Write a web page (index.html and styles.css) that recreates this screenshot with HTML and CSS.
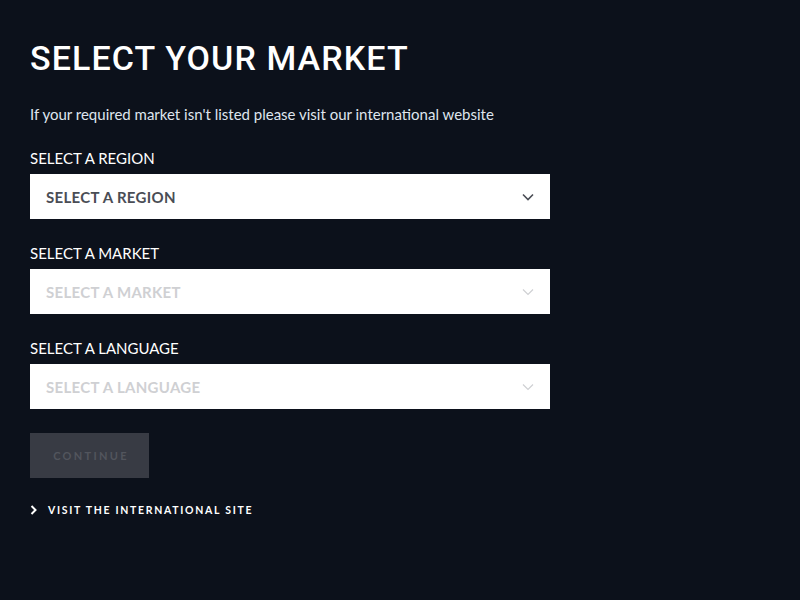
FILE: index.html
```html
<!DOCTYPE html>
<html lang="en">
<head>
    <meta charset="UTF-8">
    <meta name="viewport" content="width=device-width, initial-scale=1.0">
    <title>Select your market</title>
    <link rel="stylesheet" href="styles.css">
</head>
<body>
    <main class="market">
        <h1 class="title">SELECT YOUR MARKET</h1>
        <p class="intro">If your required market isn't listed please visit our international website</p>

        <div class="field">
            <label class="label">SELECT A REGION</label>
            <div class="select">
                <span>SELECT A REGION</span>
                <svg class="chev" width="12" height="8" viewBox="0 0 12 8"><path d="M1 1.5l5 5 5-5" fill="none" stroke="currentColor" stroke-width="1.6"/></svg>
            </div>
        </div>

        <div class="field">
            <label class="label">SELECT A MARKET</label>
            <div class="select disabled">
                <span>SELECT A MARKET</span>
                <svg class="chev" width="12" height="8" viewBox="0 0 12 8"><path d="M1 1.5l5 5 5-5" fill="none" stroke="currentColor" stroke-width="1.2"/></svg>
            </div>
        </div>

        <div class="field">
            <label class="label">SELECT A LANGUAGE</label>
            <div class="select disabled">
                <span>SELECT A LANGUAGE</span>
                <svg class="chev" width="12" height="8" viewBox="0 0 12 8"><path d="M1 1.5l5 5 5-5" fill="none" stroke="currentColor" stroke-width="1.2"/></svg>
            </div>
        </div>

        <button class="continue" disabled>CONTINUE</button>

        <a class="intl" href="#">
            <svg width="7" height="10" viewBox="0 0 7 10"><path d="M1.5 1l4 4-4 4" fill="none" stroke="currentColor" stroke-width="2"/></svg>
            VISIT THE INTERNATIONAL SITE
        </a>
    </main>
</body>
</html>
```

FILE: styles.css
```css
body { margin: 0; background: #0c111b; font-family: Lato, "Open Sans", sans-serif; color: #fff; }
.market { padding: 38px 30px; width: 520px; display: flex; flex-direction: column; }
.title { margin: 0; font-family: Roboto, sans-serif; font-weight: 500; font-size: 34px; letter-spacing: 1.1px; line-height: 40px; }
.intro { margin: 26px 0 0; font-size: 15px; color: #dfe5ee; line-height: 20px; }
.field { margin-top: 24px; display: flex; flex-direction: column; }
.label { font-size: 15px; line-height: 20px; margin-bottom: 6px; }
.select { height: 45px; background: #fff; display: flex; align-items: center; justify-content: space-between; padding: 0 16px; color: #4a4d55; font-weight: 700; font-size: 15px; letter-spacing: 0.3px; }
.select.disabled { color: #cfd0d3; }
.continue { margin-top: 24px; width: 119px; height: 45px; border: 0; background: #383b44; color: #52555d; font-family: Lato, sans-serif; font-weight: 700; font-size: 11px; letter-spacing: 2.3px; padding: 0 0 0 3px; }
.intl { margin-top: 26px; display: flex; align-items: center; gap: 11px; color: #fff; text-decoration: none; font-weight: 700; font-size: 10.5px; letter-spacing: 1.7px; }
```
